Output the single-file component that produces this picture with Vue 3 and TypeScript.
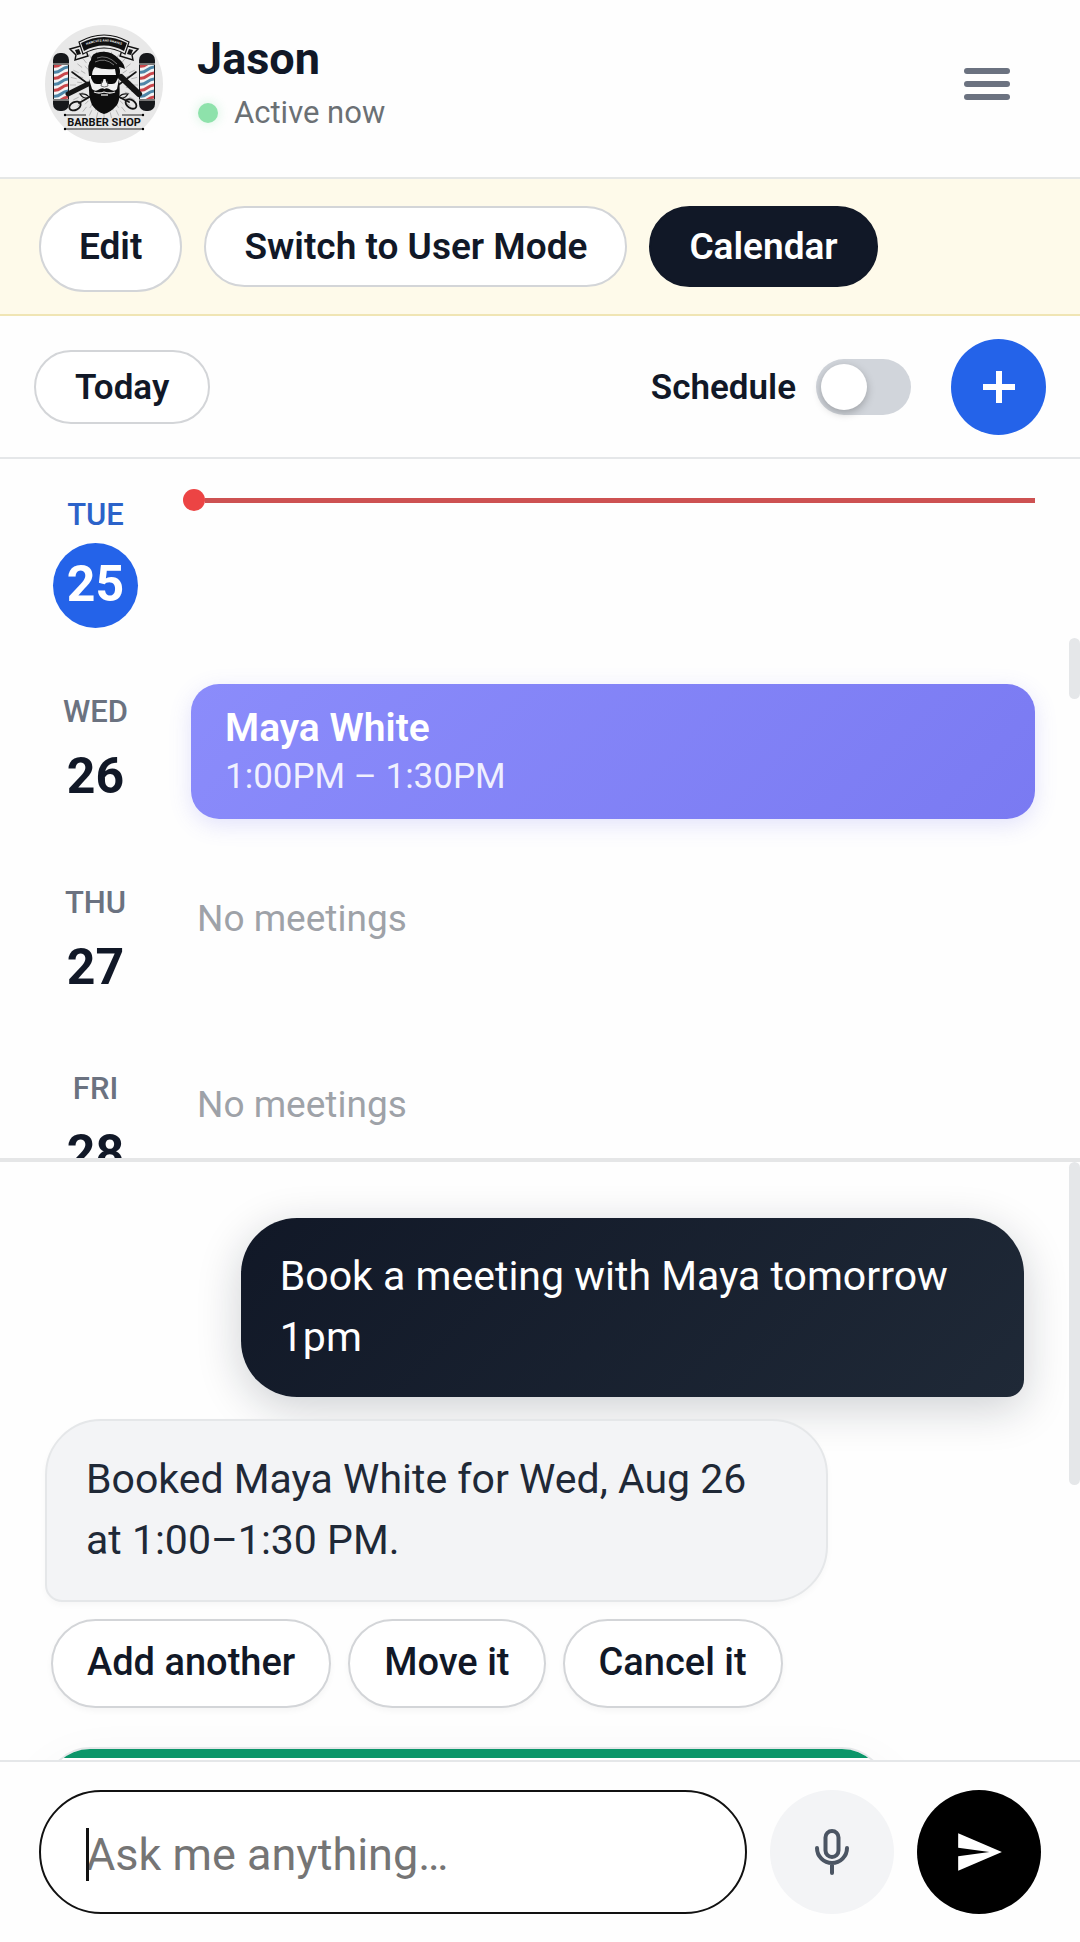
<script setup lang="ts">
import { ref } from 'vue'

interface Meeting {
  title: string
  time: string
}

interface Day {
  dow: string
  date: number
  today?: boolean
  meetings: Meeting[]
}

interface Message {
  from: 'user' | 'bot'
  text: string
}

const days: Day[] = [
  { dow: 'TUE', date: 25, today: true, meetings: [] },
  { dow: 'WED', date: 26, meetings: [{ title: 'Maya White', time: '1:00PM – 1:30PM' }] },
  { dow: 'THU', date: 27, meetings: [] },
  { dow: 'FRI', date: 28, meetings: [] },
]

const messages: Message[] = [
  { from: 'user', text: 'Book a meeting with Maya tomorrow 1pm' },
  { from: 'bot', text: 'Booked Maya White for Wed, Aug 26 at 1:00–1:30 PM.' },
]

const replies = ['Add another', 'Move it', 'Cancel it']
const rays = Array.from({ length: 28 }, (_, i) => (i * 360) / 28)
const stripes = [0, 1, 2, 3, 4, 5, 6]

const schedule = ref(false)
const draft = ref('')
</script>

<template>
  <div class="app">
    <header class="header">
      <svg class="avatar" viewBox="0 0 118 118" role="img" aria-label="Barber shop logo">
        <defs>
          <clipPath id="pole"><rect x="1" y="12" width="14" height="34" /></clipPath>
          <path id="ribbon" d="M36 26 Q59 13 82 26" />
          <g id="barber-pole">
            <rect x="0" y="0" width="16" height="58" rx="7" fill="#16181b" />
            <rect x="1" y="12" width="14" height="34" fill="#f4f4f4" />
            <g clip-path="url(#pole)" fill="none" stroke-width="3">
              <path
                v-for="n in stripes"
                :key="n"
                :d="`M0 ${n * 6 + 13} q4 1 8 -2 t8 -3`"
                :stroke="n % 2 ? '#4f86a8' : '#c9474c'"
              />
            </g>
            <rect x="0" y="10" width="16" height="2" fill="#777" />
            <rect x="0" y="46" width="16" height="2" fill="#777" />
          </g>
        </defs>
        <circle cx="59" cy="59" r="59" fill="#e8e8e8" />
        <g stroke="#9a9a9a" stroke-width="0.6">
          <line
            v-for="a in rays"
            :key="a"
            x1="59"
            y1="32"
            x2="59"
            y2="26"
            :transform="`rotate(${a} 59 60)`"
          />
          <line
            v-for="a in rays"
            :key="`l${a}`"
            x1="59"
            y1="38"
            x2="59"
            y2="33"
            :transform="`rotate(${a + 6} 59 60)`"
          />
        </g>
        <use href="#barber-pole" x="8" y="28" />
        <use href="#barber-pole" x="94" y="28" />
        <!-- ribbon -->
        <path d="M25 24 L39 20 L43 31 L30 35 L31 30 Z M93 24 L79 20 L75 31 L88 35 L87 30 Z" fill="#e8e8e8" stroke="#111" stroke-width="1.4" />
        <path d="M30 25 l4 -1 l2 5 l-4 1 Z M88 25 l-4 -1 l-2 5 l4 1 Z" fill="#111" />
        <path d="M34 17 Q59 3 84 17 L80 29 Q59 17 38 29 Z" fill="#e8e8e8" stroke="#111" stroke-width="1.2" />
        <path d="M36 18 Q59 6 82 18 L79 26 Q59 15 39 26 Z" fill="#111" />
        <text class="logo-ribbon" text-anchor="middle" dy="-3">
          <textPath href="#ribbon" startOffset="50%">HAIRCUTS AND SHAVES</textPath>
        </text>
        <!-- scissors and razors -->
        <g stroke="#151515" fill="none" stroke-linecap="round">
          <path d="M27 47 L46 61 M91 47 L72 61" stroke-width="1.6" />
          <path d="M23 69 L43 59" stroke-width="5" />
          <path d="M94 69 L76 52" stroke-width="6" />
          <path d="M48 70 L34 78 M70 70 L84 77" stroke-width="1.8" />
          <ellipse cx="30" cy="81" rx="6" ry="4" stroke-width="1.8" transform="rotate(-25 30 81)" />
          <ellipse cx="86" cy="79" rx="6" ry="4" stroke-width="1.8" transform="rotate(35 86 79)" />
          <path d="M35 69 q6 -1 9 3 q-5 3 -9 -3 Z M83 69 q-6 -1 -9 3 q5 3 9 -3 Z" stroke-width="1.2" />
        </g>
        <!-- head -->
        <path d="M45 44 H73 V70 Q70 84 59 85 Q48 84 45 70 Z" fill="#f2f2f2" />
        <path d="M44 51 Q42 38 46 35 Q46 28 55 27 Q66 25 74 34 Q79 38 80 44 Q76 42 74 42 Q76 47 74 52 L71 50 L70 44 Q58 45 50 42 Q47 45 47 51 Z" fill="#0d0d0d" />
        <path d="M52 33 Q62 29 72 39 M50 37 Q60 32 69 40" fill="none" stroke="#8d8d8d" stroke-width="0.8" />
        <path d="M46 50 H73 V53 L71 57 Q70 59 67 59 H64 Q61 59 60.500 54 H58.500 Q58 59 55 59 H52 Q49 59 48 57 L46 53 Z" fill="#0a0a0a" />
        <path d="M44 54 L47 64 Q50 67 53 65 Q57 62 59.500 64 Q62 62 66 65 Q70 67 72 64 L74 54 Q76 74 72 80 Q65 88 59 89 Q52 87 47 80 Q43 72 44 54 Z" fill="#0d0d0d" />
        <path d="M49 67 Q54 69 59 67 Q65 69 70 67" fill="none" stroke="#e8e8e8" stroke-width="1.3" />
        <path d="M56 70 h7" stroke="#ddd" stroke-width="1.4" />
        <path d="M57 56 L56 61 Q59 63 63 61 L62 56" fill="none" stroke="#555" stroke-width="0.8" />
        <!-- name plate -->
        <path d="M20 90 H41 M77 90 H98 M20 104 H98" stroke="#222" stroke-width="1.2" />
        <circle cx="20" cy="90" r="1.200" /><circle cx="98" cy="90" r="1.200" />
        <circle cx="20" cy="104" r="1.200" /><circle cx="98" cy="104" r="1.200" />
        <text class="logo-name" x="59" y="101" text-anchor="middle">BARBER SHOP</text>
      </svg>
      <div class="identity">
        <h1 class="name">Jason</h1>
        <p class="status"><span class="status-dot"></span>Active now</p>
      </div>
      <button class="menu" type="button" aria-label="Menu">
        <span></span><span></span><span></span>
      </button>
    </header>

    <nav class="modes" aria-label="Modes">
      <button class="pill pill-tall" type="button">Edit</button>
      <button class="pill" type="button">Switch to User Mode</button>
      <button class="pill pill-dark" type="button">Calendar</button>
    </nav>

    <div class="toolbar">
      <button class="today" type="button">Today</button>
      <label class="schedule">
        Schedule
        <input v-model="schedule" class="switch" type="checkbox" role="switch" />
      </label>
      <button class="add" type="button" aria-label="Add meeting">
        <svg viewBox="0 0 32 32" width="32" height="32" fill="none" stroke="#fff" stroke-width="6">
          <path d="M0 16 H32 M16 0 V32" />
        </svg>
      </button>
    </div>

    <section class="calendar" aria-label="Agenda">
      <div v-for="day in days" :key="day.date" class="day" :class="{ 'is-today': day.today }">
        <div class="day-label">
          <span class="dow">{{ day.dow }}</span>
          <span class="date">{{ day.date }}</span>
        </div>
        <div class="day-body">
          <div v-if="day.today" class="now"><span class="now-dot"></span></div>
          <article v-for="m in day.meetings" :key="m.title" class="event">
            <h2 class="event-title">{{ m.title }}</h2>
            <p class="event-time">{{ m.time }}</p>
          </article>
          <p v-if="!day.today && !day.meetings.length" class="empty">No meetings</p>
        </div>
      </div>
      <span class="thumb thumb-calendar"></span>
    </section>

    <main class="chat">
      <p v-for="m in messages" :key="m.text" class="bubble" :class="m.from">{{ m.text }}</p>
      <div class="replies">
        <button v-for="r in replies" :key="r" class="reply" type="button">{{ r }}</button>
      </div>
      <div class="card"></div>
      <span class="thumb thumb-chat"></span>
    </main>

    <form class="composer" @submit.prevent>
      <div class="field">
        <input v-model="draft" class="prompt" type="text" placeholder="Ask me anything…" aria-label="Message" />
        <span v-if="!draft" class="caret"></span>
      </div>
      <button class="round mic" type="button" aria-label="Dictate">
        <svg viewBox="0 0 48 48" width="48" height="48" fill="none" stroke="#4b5563" stroke-width="4" stroke-linecap="round">
          <rect x="17.500" y="3" width="13" height="26" rx="6.500" />
          <path d="M9 20 a15 15 0 0 0 30 0 M24 35 V45" />
        </svg>
      </button>
      <button class="round send" type="submit" aria-label="Send">
        <svg viewBox="0 0 24 24" width="50" height="50" fill="#fff">
          <path d="M2.010 21 23 12 2.010 3 2 10l15 2-15 2z" />
        </svg>
      </button>
    </form>
  </div>
</template>

<style>
body {
  margin: 0;
  background: #fefefe;
}
</style>

<style scoped>
.app,
.app * {
  box-sizing: border-box;
}

.app {
  display: flex;
  flex-direction: column;
  height: 100vh;
  overflow: hidden;
  background: #fefefe;
  color: #111827;
  font-family: Roboto, "Liberation Sans", sans-serif;
}

h1,
h2,
p {
  margin: 0;
}

button,
input {
  margin: 0;
  font-family: inherit;
  color: inherit;
}

button {
  padding: 0;
  border: 0;
  cursor: pointer;
}

svg {
  display: block;
}

/* Header */
.header {
  display: flex;
  flex: none;
  align-items: center;
  gap: 34px;
  padding: 25px 58px 34px 45px;
  border-bottom: 2px solid #e5e7e6;
}

.avatar {
  flex: none;
  width: 118px;
  height: 118px;
}

.logo-name {
  font: 700 11px Roboto, sans-serif;
  fill: #111;
}

.logo-ribbon {
  font: 700 3px Roboto, sans-serif;
  fill: #fff;
}

.identity {
  display: flex;
  flex: 1;
  flex-direction: column;
  gap: 2px;
}

.name {
  font-size: 45px;
  font-weight: 700;
  line-height: 56px;
}

.status {
  display: flex;
  align-items: center;
  gap: 16px;
  padding-left: 1px;
  color: #6b7074;
  font-size: 31px;
  line-height: 48px;
}

.status-dot {
  width: 20px;
  height: 20px;
  border-radius: 50%;
  background: #8ee2ab;
  box-shadow: 0 0 12px #22c55e33;
}

.menu {
  display: flex;
  flex-direction: column;
  gap: 7px;
  padding: 12px;
  background: none;
}

.menu span {
  width: 46px;
  height: 6px;
  border-radius: 3px;
  background: #6b7280;
}

/* Mode buttons */
.modes {
  display: flex;
  flex: none;
  align-items: center;
  gap: 22px;
  padding: 22px 39px;
  border-bottom: 2px solid #f0e5b4;
  background: #fefaea;
}

.pill {
  height: 81px;
  padding: 0 38px;
  border: 2px solid #d3d5d8;
  border-radius: 46px;
  background: #fff;
  font-size: 37px;
  font-weight: 600;
}

.pill-tall {
  height: 91px;
}

.pill-dark {
  border-color: #111827;
  background: #111827;
  color: #fff;
}

/* Calendar toolbar */
.toolbar {
  display: flex;
  flex: none;
  align-items: center;
  padding: 23px 34px 22px;
  border-bottom: 2px solid #e5e7e9;
}

.today {
  height: 74px;
  padding: 0 39px;
  border: 2px solid #d3d5d8;
  border-radius: 37px;
  background: #fff;
  font-size: 35px;
  font-weight: 600;
}

.schedule {
  display: flex;
  align-items: center;
  gap: 20px;
  margin-left: auto;
  font-size: 35px;
  font-weight: 600;
}

.switch {
  display: flex;
  align-items: center;
  width: 95px;
  height: 56px;
  padding: 5px;
  border-radius: 28px;
  appearance: none;
  background: #d1d5db;
}

.switch::before {
  content: "";
  width: 46px;
  height: 46px;
  border-radius: 50%;
  background: #fff;
  box-shadow: 0 3px 8px #00000040;
}

.switch:checked {
  justify-content: flex-end;
  background: #2563eb;
}

.add {
  display: flex;
  align-items: center;
  justify-content: center;
  width: 95px;
  height: 96px;
  margin-left: 40px;
  border-radius: 50%;
  background: #2463e9;
}

/* Agenda */
.calendar {
  position: relative;
  flex: none;
  box-sizing: content-box !important;
  height: 36vh;
  overflow: hidden;
  border-bottom: 4px solid #e5e6e7;
}

.day {
  display: flex;
  gap: 34px;
  min-height: 186px;
  padding: 28px 45px 28px 34px;
}

.day-label {
  display: flex;
  flex: none;
  flex-direction: column;
  align-items: center;
  gap: 7px;
  width: 123px;
  padding-top: 7px;
}

.dow {
  color: #6b7280;
  font-size: 31px;
  font-weight: 500;
  line-height: 42px;
}

.date {
  font-size: 50px;
  font-weight: 700;
  line-height: 72px;
}

.is-today .dow {
  color: #2b62c9;
}

.is-today .date {
  width: 85px;
  height: 85px;
  border-radius: 50%;
  background: #2463e9;
  color: #fff;
  line-height: 82px;
  text-align: center;
}

.day-body {
  flex: 1;
  min-width: 0;
}

.now {
  display: flex;
  align-items: center;
  height: 22px;
  margin: 2px 0 0 -8px;
}

.now::after {
  content: "";
  flex: 1;
  height: 5px;
  background: #cd5152;
}

.now-dot {
  width: 22px;
  height: 22px;
  border-radius: 50%;
  background: #ec4444;
}

.event {
  height: 135px;
  padding: 20px 34px;
  border-radius: 28px;
  background: linear-gradient(135deg, #8b8cfb, #7a7af2);
  box-shadow: 0 6px 22px #6366f12e;
  color: #fff;
}

.event-title {
  font-size: 39px;
  font-weight: 600;
  line-height: 48px;
}

.event-time {
  color: #ffffffe0;
  font-size: 35px;
  line-height: 50px;
}

.empty {
  padding: 16px 6px 0;
  color: #9ea2a8;
  font-size: 37px;
  line-height: 56px;
}

.thumb {
  position: absolute;
  right: 0;
  width: 11px;
  border-radius: 6px;
  background: #e5e7e9;
}

.thumb-calendar {
  top: 179px;
  height: 61px;
}

.thumb-chat {
  top: 0;
  height: 323px;
}

/* Conversation */
.chat {
  position: relative;
  display: flex;
  flex: 1;
  flex-direction: column;
  align-items: flex-start;
  min-height: 0;
  padding: 56px 56px 0 45px;
  overflow: hidden;
}

.bubble {
  flex: none;
  width: 80%;
  padding: 28px 39px 29px;
  font-size: 41px;
  line-height: 61px;
}

.user {
  align-self: flex-end;
  margin-bottom: 22px;
  border-radius: 56px 56px 17px 56px;
  background: linear-gradient(135deg, #111827, #1f2937);
  box-shadow: 0 11px 45px #11182733;
  color: #fff;
}

.bot {
  position: relative;
  border: 2px solid #e5e7e9;
  border-radius: 56px 56px 56px 17px;
  background: #f3f4f6;
  box-shadow: 0 3px 6px #00000008;
  color: #1f2937;
}

.replies {
  display: flex;
  flex: none;
  gap: 17px;
  margin: 17px 6px 39px;
}

.reply {
  height: 89px;
  padding: 0 34px 4px;
  border: 2px solid #d3d5d8;
  border-radius: 45px;
  background: #fff;
  box-shadow: 0 3px 6px #0000000a;
  font-size: 38px;
  font-weight: 500;
}

.card {
  flex: none;
  width: 86%;
  height: 240px;
  overflow: hidden;
  border: 2px solid #e5e7e9;
  border-radius: 45px;
  background: #fff;
  box-shadow: 0 22px 60px #0000000f;
}

.card::before {
  content: "";
  display: block;
  height: 9px;
  background: #0b9669;
}

/* Composer */
.composer {
  position: relative;
  display: flex;
  flex: none;
  gap: 23px;
  padding: 28px 39px;
  border-top: 2px solid #e5e7e9;
  background: #fefefe;
}

.field {
  position: relative;
  flex: 1;
  min-width: 0;
}

.prompt {
  display: block;
  width: 100%;
  height: 124px;
  padding: 4px 45px 0;
  border: 2px solid #111;
  border-radius: 62px;
  outline: 0;
  background: #fff;
  font-size: 45px;
}

.prompt::placeholder {
  color: #757575;
  opacity: 1;
}

.caret {
  position: absolute;
  top: 38px;
  left: 47px;
  width: 3px;
  height: 53px;
  background: #111;
}

.round {
  display: flex;
  flex: none;
  align-items: center;
  justify-content: center;
  width: 124px;
  height: 124px;
  border-radius: 50%;
}

.mic {
  background: #f3f4f6;
}

.send {
  background: #000;
}
</style>
